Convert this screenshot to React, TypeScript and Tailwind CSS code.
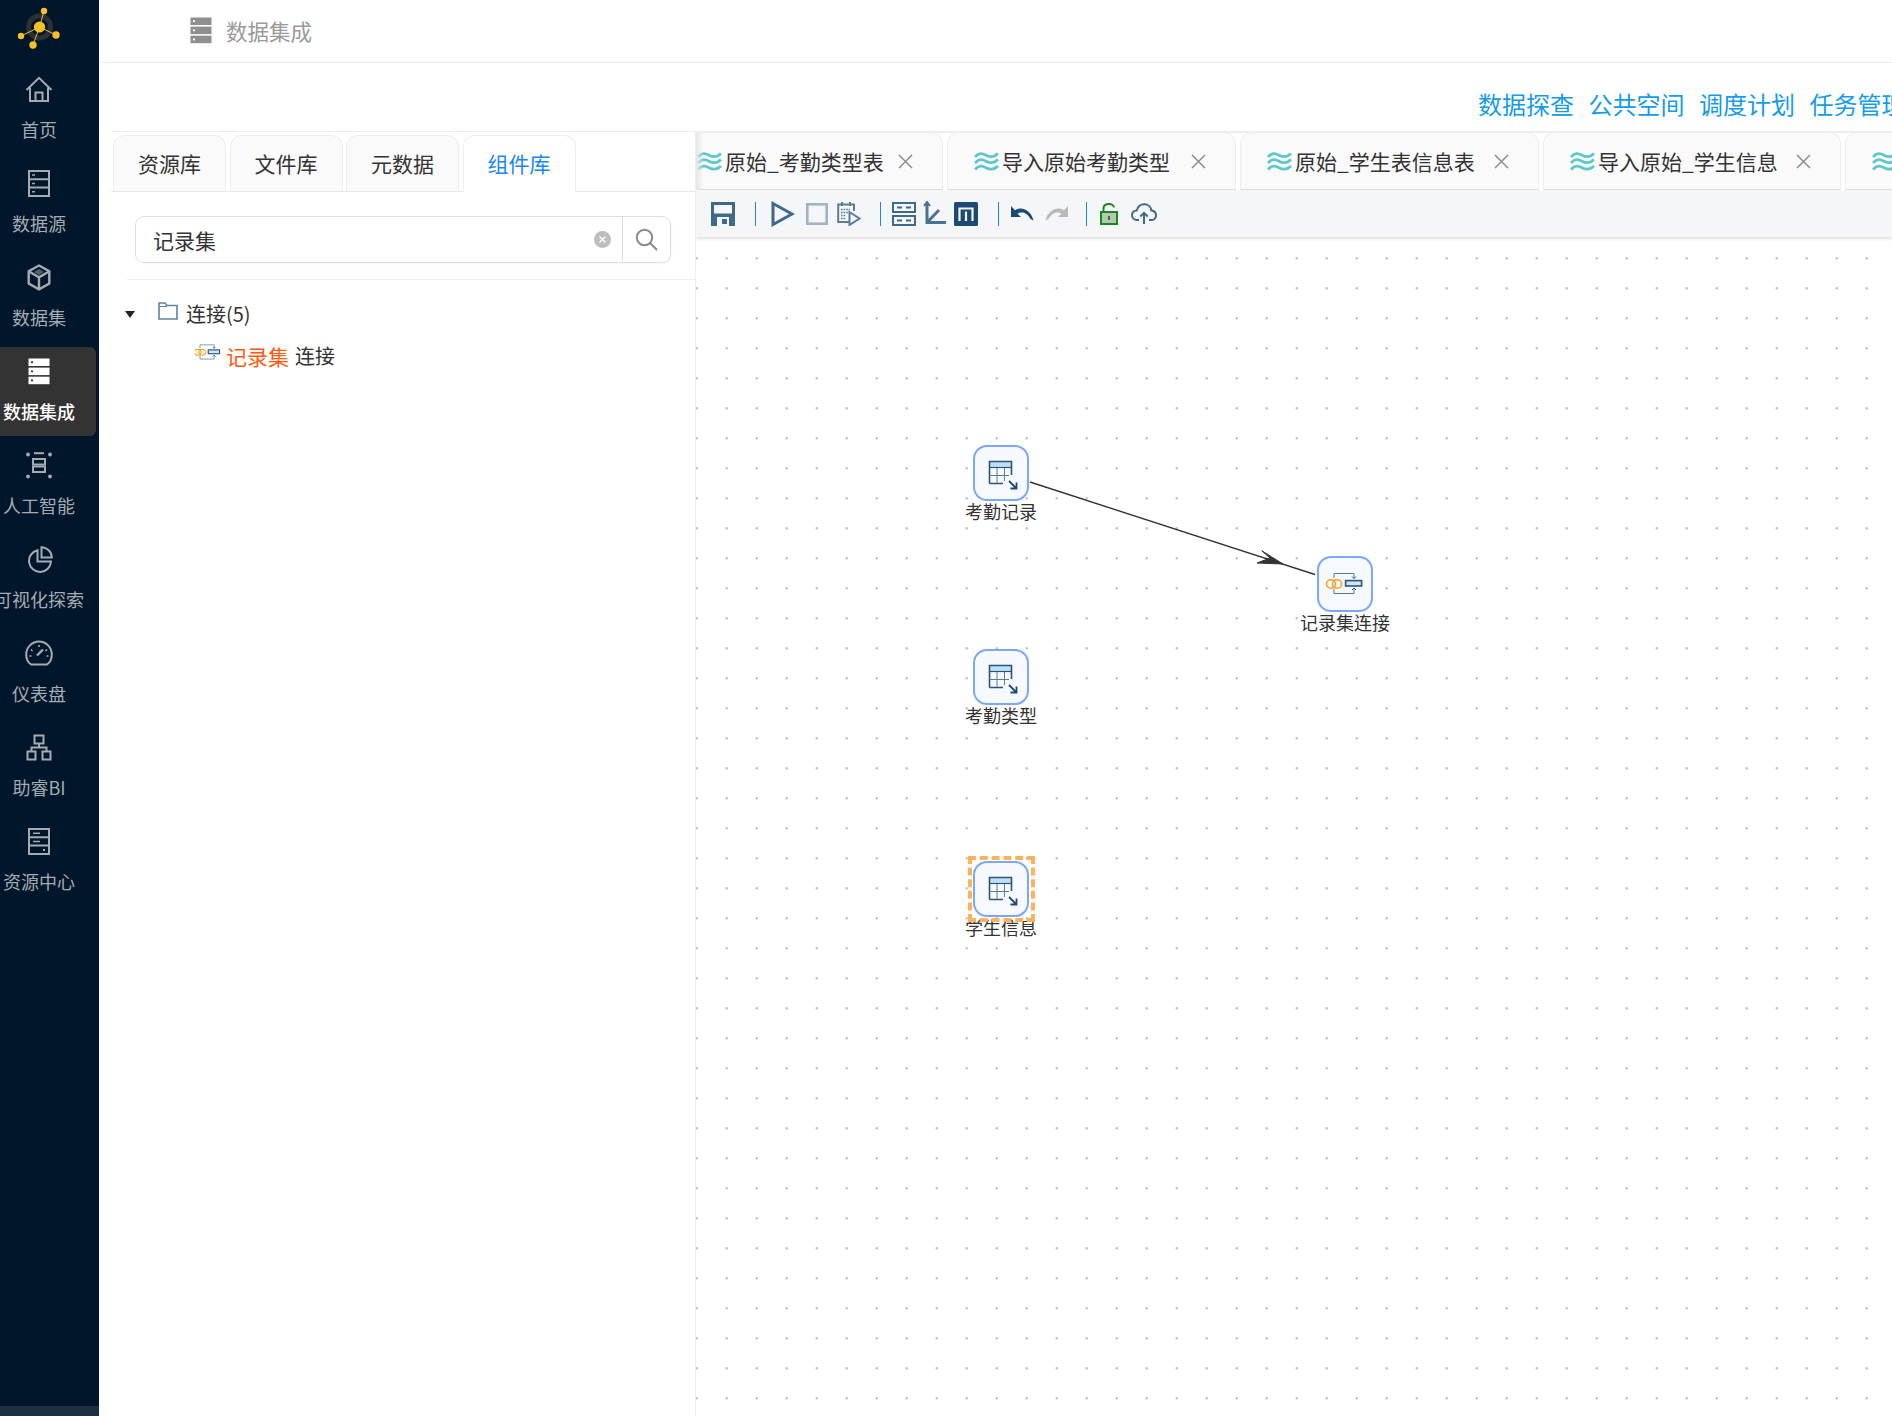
import React from "react";

const C = "#a5abb2";

function HomeIcon() {
  return (
    <svg width="28" height="27" viewBox="0 0 28 27" fill="none" stroke="currentColor" strokeWidth="2">
      <path d="M1.5 14 14 1.8 26.5 14" />
      <path d="M5 11.5V25H23V11.5" />
      <path d="M10.5 25V16.5H17.5V25" />
    </svg>
  );
}
function DbIcon() {
  return (
    <svg width="22" height="27" viewBox="0 0 22 27" fill="none" stroke="currentColor" strokeWidth="2">
      <rect x="1" y="1" width="20" height="25" />
      <path d="M1 9.3H21M1 17.6H21" />
      <path d="M4 5H7M4 13.4H7M4 21.8H7" strokeWidth="1.5" />
    </svg>
  );
}
function CubeIcon() {
  return (
    <svg width="24" height="27" viewBox="0 0 24 27" fill="none" stroke="currentColor" strokeWidth="2.4">
      <path d="M12 1.5 22.3 7.2V19.6L12 25.4 1.7 19.6V7.2Z" />
      <path d="M2 7.5 12 13.4 22 7.5M12 13.4V25" />
      <path d="M12 5 17 8 12 11 7 8Z" fill="currentColor" stroke="none" opacity="0.5" />
    </svg>
  );
}
function ServerFilled({ dot = "#333" }: { dot?: string }) {
  return (
    <svg width="22" height="27" viewBox="0 0 22 27">
      <rect x="0.5" y="0.5" width="21" height="7.5" fill="currentColor" />
      <rect x="0.5" y="9.6" width="21" height="7.5" fill="currentColor" />
      <rect x="0.5" y="18.7" width="21" height="7.5" fill="currentColor" />
      <circle cx="4" cy="4.2" r="1.1" fill={dot} />
      <circle cx="4" cy="13.3" r="1.1" fill={dot} />
      <circle cx="4" cy="22.4" r="1.1" fill={dot} />
    </svg>
  );
}
function AiIcon() {
  return (
    <svg width="28" height="27" viewBox="0 0 28 27" fill="none" stroke="currentColor">
      <circle cx="3" cy="2.5" r="1.9" fill="currentColor" stroke="none" />
      <circle cx="25" cy="2.5" r="1.9" fill="currentColor" stroke="none" />
      <circle cx="3" cy="24.5" r="1.9" fill="currentColor" stroke="none" />
      <circle cx="25" cy="24.5" r="1.9" fill="currentColor" stroke="none" />
      <rect x="8" y="7" width="12" height="5.5" strokeWidth="2" />
      <rect x="8" y="14.5" width="12" height="5.5" strokeWidth="2" />
      <path d="M9 1.2H19" strokeWidth="2" />
    </svg>
  );
}
function PieIcon() {
  return (
    <svg width="27" height="27" viewBox="0 0 27 27" fill="none" stroke="currentColor" strokeWidth="2">
      <path d="M11.5 4.2A11 11 0 1 0 25 15.5H11.5Z" />
      <path d="M15.5 1.2A10.5 10.5 0 0 1 25.8 11.5H15.5Z" />
    </svg>
  );
}
function GaugeIcon() {
  return (
    <svg width="28" height="27" viewBox="0 0 28 27" fill="none" stroke="currentColor" strokeWidth="2">
      <path d="M6 24.5C3 22.5 1.2 18.6 1.2 14.5 1.2 7.4 6.9 1.5 14 1.5S26.8 7.4 26.8 14.5C26.8 18.6 25 22.5 22 24.5Z" />
      <path d="M14 5V7M6 9.5 7.5 11M22 9.5 20.5 11M4.5 16H6.5M21.5 16H23.5" strokeWidth="1.6" />
      <path d="M12 15.5 18 9.5" strokeWidth="2.4" />
    </svg>
  );
}
function OrgIcon() {
  return (
    <svg width="26" height="27" viewBox="0 0 26 27" fill="none" stroke="currentColor" strokeWidth="2">
      <rect x="8.5" y="1.5" width="9" height="8" />
      <rect x="1.5" y="17.5" width="8" height="8" />
      <rect x="16.5" y="17.5" width="8" height="8" />
      <path d="M13 9.5V14M5.5 17.5V13.5H20.5V17.5" />
    </svg>
  );
}
function ResourceIcon() {
  return (
    <svg width="22" height="27" viewBox="0 0 22 27" fill="none" stroke="currentColor" strokeWidth="2">
      <rect x="1" y="1" width="20" height="25" />
      <path d="M1 9.3H21M1 17.6H21" />
      <path d="M5 5.2H12M5 13.5H12" strokeWidth="1.5" />
      <path d="M15 22H17" strokeWidth="2" />
    </svg>
  );
}

const nav = [
  { label: "首页", icon: <HomeIcon /> },
  { label: "数据源", icon: <DbIcon /> },
  { label: "数据集", icon: <CubeIcon /> },
  { label: "数据集成", icon: <ServerFilled />, active: true },
  { label: "人工智能", icon: <AiIcon /> },
  { label: "可视化探索", icon: <PieIcon /> },
  { label: "仪表盘", icon: <GaugeIcon /> },
  { label: "助睿BI", icon: <OrgIcon /> },
  { label: "资源中心", icon: <ResourceIcon /> },
];

function Logo() {
  return (
    <svg width="48" height="44" viewBox="0 0 48 44" className="block">
      <circle cx="24.5" cy="22" r="11" fill="none" stroke="#2c3034" strokeWidth="5" />
      <path d="M24.5 22 29 6M24.5 22 6 31M24.5 22 41 30M24.5 22 18 40" stroke="#f2bd2b" strokeWidth="1" />
      <circle cx="24.5" cy="22" r="5.6" fill="#f6c026" />
      <circle cx="29" cy="6" r="3.2" fill="#f6c026" />
      <circle cx="6" cy="31" r="3.2" fill="#f6c026" />
      <circle cx="41" cy="30" r="3.7" fill="#f6c026" />
      <circle cx="18" cy="40" r="3.7" fill="#f6c026" />
    </svg>
  );
}

function Waves() {
  return (
    <svg width="25" height="21" viewBox="0 0 25 21" fill="none" stroke="#5cc8cb" strokeWidth="2.8" className="shrink-0">
      <path d="M1 6C5 1.5 8 2 12 4.2 16 6.4 20 6.4 24 2.5" />
      <path d="M1 12C5 7.5 8 8 12 10.2 16 12.4 20 12.4 24 8.5" />
      <path d="M1 18.5C5 14 8 14.5 12 16.7 16 18.9 20 18.9 24 15" />
    </svg>
  );
}

function CloseX() {
  return (
    <svg width="15" height="15" viewBox="0 0 15 15" stroke="#8d8d8d" strokeWidth="1.5" className="shrink-0">
      <path d="M1 1 14 14M14 1 1 14" />
    </svg>
  );
}

const I = "#3f6889";

function Sep() {
  return <div className="h-[24px] w-px bg-[#1e88e5]" />;
}

function Toolbar() {
  return (
    <div className="flex h-[47px] shrink-0 items-center bg-[#f5f6f8] pl-[15px] shadow-[0_2px_3px_rgba(0,0,0,0.12)]">
      <svg width="24" height="24" viewBox="0 0 24 24" className="shrink-0">
        <rect width="24" height="24" fill={I} />
        <rect x="3" y="3" width="18" height="8.5" fill="#f5f6f8" />
        <rect x="6" y="15" width="12" height="9" fill="#f5f6f8" />
        <rect x="11" y="17" width="5" height="5" fill={I} />
      </svg>
      <div className="ml-[20px]"><Sep /></div>
      <svg width="24" height="26" viewBox="0 0 24 26" fill="none" stroke={I} strokeWidth="3" className="ml-[15px] shrink-0">
        <path d="M2 2.5 21 13 2 23.5Z" />
      </svg>
      <svg width="22" height="22" viewBox="0 0 22 22" fill="none" stroke="#9fb4c6" strokeWidth="2.6" className="ml-[11px] shrink-0">
        <rect x="1.3" y="1.3" width="19.4" height="19.4" />
      </svg>
      <svg width="24" height="25" viewBox="0 0 24 25" fill="none" stroke="#5a7d99" className="ml-[9px] shrink-0">
        <path d="M12 21H1.2V3.5H17V10" strokeWidth="2" />
        <path d="M5 1V5M13 1V5" strokeWidth="2" />
        <path d="M4 8.5H13M4 11.5H11M4 14.5H9M4 17.5H9" strokeWidth="1.6" strokeDasharray="1.6 1" />
        <path d="M12.5 11 22.5 17.5 12.5 24Z" strokeWidth="2" fill="#f5f6f8" />
      </svg>
      <div className="ml-[19px]"><Sep /></div>
      <svg width="24" height="24" viewBox="0 0 24 24" fill="none" stroke={I} className="ml-[11px] shrink-0">
        <rect x="1" y="1" width="22" height="9" strokeWidth="2" />
        <rect x="1" y="14" width="22" height="9" strokeWidth="2" />
        <path d="M5 5.5H10M14 5.5H19M5 18.5H10M14 18.5H19" strokeWidth="2" />
      </svg>
      <svg width="24" height="25" viewBox="0 0 24 25" fill="none" stroke="#4b7291" strokeWidth="3" className="ml-[7px] shrink-0">
        <path d="M4 2V21.5H23" />
        <path d="M4 21.5 16 9" />
        <path d="M1 5 4 1 7 5" strokeWidth="2" />
      </svg>
      <svg width="24" height="24" viewBox="0 0 24 24" className="ml-[7px] shrink-0">
        <rect width="24" height="24" rx="1.5" fill="#1d4a70" />
        <path d="M5.5 19V6.5H18.5V19M12 19V9.5" fill="none" stroke="#f5f6f8" strokeWidth="2.2" />
      </svg>
      <div className="ml-[20px]"><Sep /></div>
      <svg width="23" height="16" viewBox="0 0 23 16" className="ml-[12px] shrink-0">
        <path d="M0 0V11H10L6.5 7.8C9.5 5.8 15.5 5.5 19.5 13L22.5 14.5C20 4 10 0 4 4.3Z" fill="#1b4a70" />
      </svg>
      <svg width="23" height="16" viewBox="0 0 23 16" className="ml-[11px] shrink-0">
        <path d="M23 0V11H13L16.5 7.8C13.5 5.8 7.5 5.5 3.5 13L.5 14.5C3 4 13 0 19 4.3Z" fill="#b9b9b9" />
      </svg>
      <div className="ml-[18px]"><Sep /></div>
      <svg width="18" height="22" viewBox="0 0 18 22" fill="none" className="ml-[13px] shrink-0">
        <path d="M3.5 9V5.5C3.5 -0.5 13.5 -0.2 14 4.5" stroke="#19891f" strokeWidth="2" />
        <rect x="1" y="9" width="16" height="12" fill="#b8c7b2" stroke="#19891f" strokeWidth="2" />
        <rect x="8" y="13" width="2" height="4" fill="#19891f" />
      </svg>
      <svg width="26" height="22" viewBox="0 0 26 22" fill="none" stroke={I} strokeWidth="2" className="ml-[13px] shrink-0">
        <path d="M8 17H6C3 17 1 14.7 1 12.2 1 9.5 3 7.5 5.8 7.4 6.8 3.8 9.6 1.3 13.2 1.3 17.3 1.3 20 4.3 20.4 7.6 23 7.9 25 9.8 25 12.4 25 15 23 17 20 17H18" />
        <path d="M13 21V10M9.3 13.5 13 9.8 16.7 13.5" />
      </svg>
    </div>
  );
}

function TableGlyph() {
  return (
    <svg width="56" height="56" viewBox="0 0 56 56" fill="none" className="-m-[2px] shrink-0">
      <rect x="16.5" y="16.5" width="22" height="6" fill="#bfe0f7" />
      <path d="M16.5 38.5V16.5H38.5V30M16.5 38.5H30" stroke="#2a5478" strokeWidth="1.6" />
      <path d="M16.5 22.5H38.5" stroke="#2a5478" strokeWidth="1.2" />
      <path d="M16.5 30.5H36M24 23V38M31.5 23V36" stroke="#5a7d99" strokeWidth="1" />
      <path d="M36 36 43.5 43.5M43.5 37.5V43.5H37.5" stroke="#1f4a6f" strokeWidth="1.8" />
    </svg>
  );
}

function JoinGlyph({ w = 56, h = 56, vb = "0 0 56 56" }: { w?: number; h?: number; vb?: string }) {
  return (
    <svg width={w} height={h} viewBox={vb} fill="none" className="shrink-0">
      <ellipse cx="14" cy="28" rx="4.6" ry="4.2" stroke="#f5a020" strokeWidth="1.6" />
      <ellipse cx="20" cy="28" rx="4.6" ry="4.2" stroke="#f5a020" strokeWidth="1.6" />
      <rect x="28.6" y="24.6" width="16" height="5.4" stroke="#2a5478" strokeWidth="1.6" fill="#cfe4f5" />
      <path d="M37 22.5V17.5H17V22M37 32V37.5H17V33" stroke="#54789a" strokeWidth="1" />
      <path d="M35 20.5 37 22.5 39 20.5M35 34 37 32 39 34" stroke="#2a5478" strokeWidth="1" />
    </svg>
  );
}

function Node({ left, top, label, children }: { left: number; top: number; label: string; children: React.ReactNode }) {
  return (
    <div className="absolute h-[56px] w-[56px]" style={{ left, top }}>
      <div className="flex h-full w-full items-center justify-center rounded-[14px] border-2 border-[#7ca8fb] bg-[#f6faff]">
        {children}
      </div>
      <div className="absolute left-1/2 top-full -translate-x-1/2 whitespace-nowrap text-[18px] leading-[21px] text-[#333]">
        {label}
      </div>
    </div>
  );
}

const fileTabs = [
  { name: "原始_考勤类型表", w: "w-[273px]", ml: "-ml-[26px]" },
  { name: "导入原始考勤类型", w: "w-[289px]", ml: "" },
  { name: "原始_学生表信息表", w: "w-[299px]", ml: "" },
  { name: "导入原始_学生信息", w: "w-[298px]", ml: "" },
  { name: "", w: "w-[298px]", ml: "" },
];

export default function App() {
  return (
    <div className="flex h-[1416px] w-[1892px] overflow-hidden bg-white font-['Noto_Sans_CJK_SC','Noto_Sans',sans-serif]">
      <aside className="flex w-[99px] shrink-0 flex-col bg-[#00162b]">
        <div className="flex h-[65px] shrink-0 items-start pl-[15px] pt-[5px]">
          <Logo />
        </div>
        <nav className="flex flex-col gap-[5px]">
          {nav.map((n) => (
            <div
              key={n.label}
              className={`flex h-[89px] w-[96px] flex-col rounded-r-[6px] ${n.active ? "bg-[#333333] font-medium text-white" : "text-[#a5abb2]"}`}
            >
              <div className="flex w-[78px] flex-col items-center">
                <div className="flex h-[27px] mt-[11px] items-center justify-center">{n.icon}</div>
                <div className="mt-[13px] whitespace-nowrap text-[18px] leading-[27px]">{n.label}</div>
              </div>
            </div>
          ))}
        </nav>
        <div className="flex-1" />
        <div className="h-[10px] shrink-0 bg-[#1d2f42]" />
      </aside>

      <main className="flex min-w-0 flex-1 flex-col">
        <header className="flex h-[63px] shrink-0 items-center border-b border-[#eeeeee] pl-[91px] text-[#9a9a9a]">
          <div className="-mt-[2px] flex items-center text-[#8f8f8f]">
            <ServerFilled dot="#ffffff" />
          </div>
          <span className="ml-[14px] text-[21.5px] leading-[30px]">数据集成</span>
        </header>

        <div className="flex h-[68px] shrink-0 items-start gap-[14.5px] whitespace-nowrap pl-[1379px] pt-[24px] text-[24px] leading-[34px] text-[#149bea]">
          <span>数据探查</span>
          <span>公共空间</span>
          <span>调度计划</span>
          <span>任务管理</span>
        </div>

        <div className="flex min-h-0 flex-1">
          <section className="ml-[12px] flex w-[585px] shrink-0 flex-col border-r border-t border-[#eeeeee]">
            <div className="flex h-[60px] shrink-0 items-end gap-[3.5px] border-b border-[#e4e7ed] pl-[2px]">
              {["资源库", "文件库", "元数据", "组件库"].map((t, i) => (
                <div
                  key={t}
                  className={`-mb-px flex h-[57px] w-[113px] items-center justify-center rounded-t-[12px] border text-[21px] ${i === 3 ? "border-[#eeeeee] border-b-white bg-white text-[#1a86f5]" : "border-[#eeeeee] border-b-[#e4e7ed] bg-[#fafafa] text-[#333]"}`}
                >
                  {t}
                </div>
              ))}
            </div>

            <div className="ml-[24px] mt-[24px] flex h-[47px] w-[536px] shrink-0 items-center rounded-[9px] border border-[#dcdfe6] shadow-[1px_1px_2px_rgba(0,0,0,0.04)]">
              <div className="flex-1 pl-[17px] text-[21px] leading-[28px] text-[#333]">记录集</div>
              <div className="mr-[11px] flex h-[17px] w-[17px] items-center justify-center rounded-full bg-[#bdbdbd]">
                <svg width="7" height="7" viewBox="0 0 7 7" stroke="#fff" strokeWidth="1.3">
                  <path d="M.5.5 6.5 6.5M6.5.5.5 6.5" />
                </svg>
              </div>
              <div className="flex h-[47px] w-[48px] items-center justify-center border-l border-[#dcdfe6]">
                <svg width="23" height="23" viewBox="0 0 23 23" fill="none" stroke="#8a8a8a" strokeWidth="2">
                  <circle cx="9.5" cy="9.5" r="7.7" />
                  <path d="M15 15 22 22" />
                </svg>
              </div>
            </div>

            <div className="ml-[16px] mt-[16px] h-px shrink-0 bg-[#eeeeee]" />

            <div className="relative mt-[19px] flex h-[30px] items-center text-[20px] leading-[30px] text-[#333]">
              <div className="ml-[14px] h-0 w-0 border-x-[5.5px] border-t-[7px] border-x-transparent border-t-[#222]" />
              <svg width="20" height="18" viewBox="0 0 20 18" fill="none" stroke="#5f83a1" strokeWidth="1.6" className="-mt-[6px] ml-[23px] shrink-0">
                <path d="M1 17V1H7L9 3.5H19V17Z" />
                <path d="M1 4.5H9" strokeWidth="1" />
              </svg>
              <span className="ml-[8px]">连接(5)</span>
            </div>
            <div className="mt-[12px] flex h-[30px] items-center text-[20px] leading-[30px]">
              <div className="-mt-[6px] ml-[84px] flex">
                <JoinGlyph w={27} h={22} vb="10 14 38 30" />
              </div>
              <span className="ml-[4px] text-[#ff5a12] text-[21px]">记录集</span>
              <span className="ml-[6px] text-[#333]">连接</span>
            </div>
          </section>

          <section className="flex min-w-0 flex-1 flex-col overflow-hidden">
            <div className="relative flex h-[59px] shrink-0 items-end gap-[4px] border-t-2 border-[#eeeeee]">
              {fileTabs.map((t) => (
                <div
                  key={t.w + t.name}
                  className={`flex h-[58px] shrink-0 items-center rounded-t-[12px] border border-[#eeeeee] border-b-[#dedede] bg-[#fafafa] pl-[26px] ${t.w} ${t.ml}`}
                >
                  <Waves />
                  {t.name && (
                    <>
                      <span className="ml-[3px] flex-1 whitespace-nowrap text-[21px] leading-[30px] text-[#333]">{t.name}</span>
                      <div className="mr-[29px]"><CloseX /></div>
                    </>
                  )}
                </div>
              ))}
              <div className="absolute bottom-0 left-0 top-0 w-[8px] bg-gradient-to-r from-[#e6e6e6] to-transparent" />
            </div>

            <Toolbar />

            <div className="relative min-h-0 flex-1 bg-[radial-gradient(circle,#b4b4b4_0.9px,transparent_1.2px)] bg-[size:30px_30px] bg-[position:-14.3px_6.3px]">
              <svg width="700" height="400" viewBox="0 0 700 400" fill="none" className="absolute left-0 top-0">
                <path d="M334 245 619 337.5" stroke="#333" strokeWidth="1.4" />
                <path d="M587 327 565.7 313.7 574 321 561 326Z" fill="#333" stroke="#333" strokeWidth="1" />
              </svg>
              <Node left={277} top={208} label="考勤记录"><TableGlyph /></Node>
              <Node left={277} top={412} label="考勤类型"><TableGlyph /></Node>
              <Node left={277} top={624} label="学生信息"><TableGlyph /></Node>
              <Node left={621} top={319} label="记录集连接"><JoinGlyph /></Node>
              <div className="absolute left-[272px] top-[619px] h-[66px] w-[67px] border-[4px] border-dashed border-[#ffb25a]" />
            </div>
          </section>
        </div>
      </main>
    </div>
  );
}
